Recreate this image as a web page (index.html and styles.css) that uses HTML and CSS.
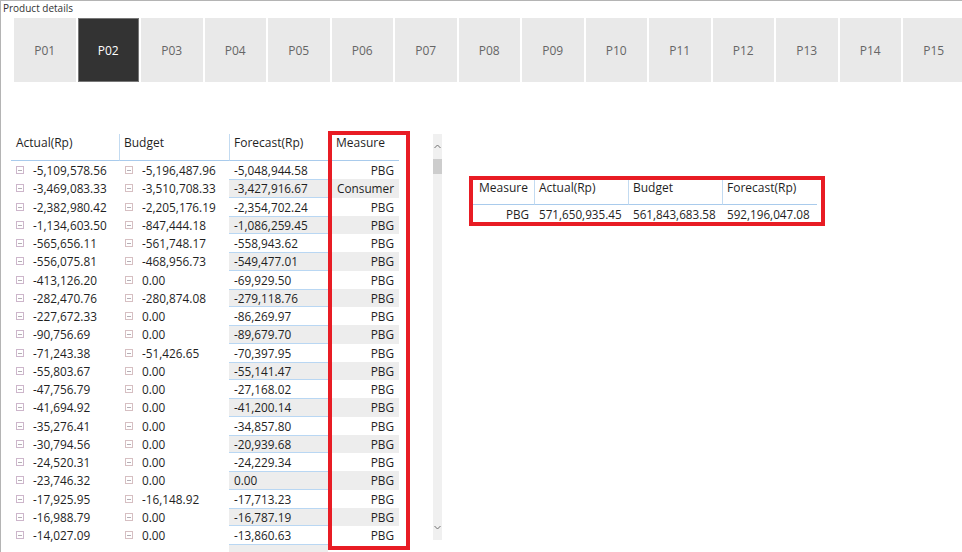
FILE: index.html
```html
<!DOCTYPE html>
<html>
<head>
<meta charset="utf-8">
<link rel="stylesheet" href="styles.css">
</head>
<body>
<div class="frame">
  <div class="title">Product details</div>
  <div class="tabs">
    <div class="tab">P01</div>
    <div class="tab active">P02</div>
    <div class="tab">P03</div>
    <div class="tab">P04</div>
    <div class="tab">P05</div>
    <div class="tab">P06</div>
    <div class="tab">P07</div>
    <div class="tab">P08</div>
    <div class="tab">P09</div>
    <div class="tab">P10</div>
    <div class="tab">P11</div>
    <div class="tab">P12</div>
    <div class="tab">P13</div>
    <div class="tab">P14</div>
    <div class="tab">P15</div>
  </div>
  <div class="content">
    <div class="tbl">
      <div class="col actual">
        <div class="hd">Actual(Rp)</div>
        <div class="c"><span class="ex"></span>-5,109,578.56</div>
        <div class="c"><span class="ex"></span>-3,469,083.33</div>
        <div class="c"><span class="ex"></span>-2,382,980.42</div>
        <div class="c"><span class="ex"></span>-1,134,603.50</div>
        <div class="c"><span class="ex"></span>-565,656.11</div>
        <div class="c"><span class="ex"></span>-556,075.81</div>
        <div class="c"><span class="ex"></span>-413,126.20</div>
        <div class="c"><span class="ex"></span>-282,470.76</div>
        <div class="c"><span class="ex"></span>-227,672.33</div>
        <div class="c"><span class="ex"></span>-90,756.69</div>
        <div class="c"><span class="ex"></span>-71,243.38</div>
        <div class="c"><span class="ex"></span>-55,803.67</div>
        <div class="c"><span class="ex"></span>-47,756.79</div>
        <div class="c"><span class="ex"></span>-41,694.92</div>
        <div class="c"><span class="ex"></span>-35,276.41</div>
        <div class="c"><span class="ex"></span>-30,794.56</div>
        <div class="c"><span class="ex"></span>-24,520.31</div>
        <div class="c"><span class="ex"></span>-23,746.32</div>
        <div class="c"><span class="ex"></span>-17,925.95</div>
        <div class="c"><span class="ex"></span>-16,988.79</div>
        <div class="c"><span class="ex"></span>-14,027.09</div>
      </div>
      <div class="col budget">
        <div class="hd">Budget</div>
        <div class="c"><span class="ex"></span>-5,196,487.96</div>
        <div class="c"><span class="ex"></span>-3,510,708.33</div>
        <div class="c"><span class="ex"></span>-2,205,176.19</div>
        <div class="c"><span class="ex"></span>-847,444.18</div>
        <div class="c"><span class="ex"></span>-561,748.17</div>
        <div class="c"><span class="ex"></span>-468,956.73</div>
        <div class="c"><span class="ex"></span>0.00</div>
        <div class="c"><span class="ex"></span>-280,874.08</div>
        <div class="c"><span class="ex"></span>0.00</div>
        <div class="c"><span class="ex"></span>0.00</div>
        <div class="c"><span class="ex"></span>-51,426.65</div>
        <div class="c"><span class="ex"></span>0.00</div>
        <div class="c"><span class="ex"></span>0.00</div>
        <div class="c"><span class="ex"></span>0.00</div>
        <div class="c"><span class="ex"></span>0.00</div>
        <div class="c"><span class="ex"></span>0.00</div>
        <div class="c"><span class="ex"></span>0.00</div>
        <div class="c"><span class="ex"></span>0.00</div>
        <div class="c"><span class="ex"></span>-16,148.92</div>
        <div class="c"><span class="ex"></span>0.00</div>
        <div class="c"><span class="ex"></span>0.00</div>
      </div>
      <div class="col forecast">
        <div class="hd">Forecast(Rp)</div>
        <div class="c">-5,048,944.58</div>
        <div class="c alt">-3,427,916.67</div>
        <div class="c">-2,354,702.24</div>
        <div class="c alt">-1,086,259.45</div>
        <div class="c">-558,943.62</div>
        <div class="c alt">-549,477.01</div>
        <div class="c">-69,929.50</div>
        <div class="c alt">-279,118.76</div>
        <div class="c">-86,269.97</div>
        <div class="c alt">-89,679.70</div>
        <div class="c">-70,397.95</div>
        <div class="c alt">-55,141.47</div>
        <div class="c">-27,168.02</div>
        <div class="c alt">-41,200.14</div>
        <div class="c">-34,857.80</div>
        <div class="c alt">-20,939.68</div>
        <div class="c">-24,229.34</div>
        <div class="c alt">0.00</div>
        <div class="c">-17,713.23</div>
        <div class="c alt">-16,787.19</div>
        <div class="c">-13,860.63</div>
        <div class="c alt"></div>
      </div>
      <div class="col measure">
        <div class="hd">Measure</div>
        <div class="c">PBG</div>
        <div class="c alt">Consumer</div>
        <div class="c">PBG</div>
        <div class="c alt">PBG</div>
        <div class="c">PBG</div>
        <div class="c alt">PBG</div>
        <div class="c">PBG</div>
        <div class="c alt">PBG</div>
        <div class="c">PBG</div>
        <div class="c alt">PBG</div>
        <div class="c">PBG</div>
        <div class="c alt">PBG</div>
        <div class="c">PBG</div>
        <div class="c alt">PBG</div>
        <div class="c">PBG</div>
        <div class="c alt">PBG</div>
        <div class="c">PBG</div>
        <div class="c alt">PBG</div>
        <div class="c">PBG</div>
        <div class="c alt">PBG</div>
        <div class="c">PBG</div>
      </div>
    </div>
    <div class="scroll">
      <div class="arrow up"><svg width="7" height="5" viewBox="0 0 7 5"><polyline points="0.5,4 3.5,1 6.5,4" fill="none" stroke="#707070" stroke-width="1"/></svg></div>
      <div class="thumb"></div>
      <div class="arrow down"><svg width="7" height="5" viewBox="0 0 7 5"><polyline points="0.5,1 3.5,4 6.5,1" fill="none" stroke="#707070" stroke-width="1"/></svg></div>
    </div>
    <div class="sumbox">
      <div class="sum">
        <div class="sh first">Measure</div>
        <div class="sh">Actual(Rp)</div>
        <div class="sh">Budget</div>
        <div class="sh">Forecast(Rp)</div>
        <div class="sd first">PBG</div>
        <div class="sd">571,650,935.45</div>
        <div class="sd">561,843,683.58</div>
        <div class="sd">592,196,047.08</div>
      </div>
    </div>
  </div>
</div>
</body>
</html>
```
FILE: styles.css
```css
html, body {
  margin: 0;
  padding: 0;
}
body {
  width: 962px;
  height: 552px;
  overflow: hidden;
  background: #fff;
  font-family: "Open Sans", "Noto Sans", sans-serif;
  color: #1f1f1f;
}
.frame {
  height: 551px;
  border-top: 1px solid #b4b4b4;
  border-left: 1px solid #b4b4b4;
  overflow: hidden;
}
.title {
  font-size: 10px;
  line-height: 14px;
  height: 14px;
  padding-left: 2px;
  color: #333;
}
.tabs {
  display: flex;
  gap: 2px;
  margin: 3px 0 0 13px;
}
.tab {
  flex: 0 0 61.5px;
  height: 64px;
  box-sizing: border-box;
  background: #e9e9e9;
  color: #666;
  font-size: 12px;
  display: flex;
  align-items: center;
  justify-content: center;
}
.tab.active {
  background: #333;
  color: #fff;
  border: 1px solid #777;
}
.content {
  display: flex;
  align-items: flex-start;
  margin-top: 49px;
}
.tbl {
  display: flex;
  align-items: flex-start;
  margin-left: 10px;
}
.col {
  display: flex;
  flex-direction: column;
  margin-top: 3px;
}
.hd {
  flex: 0 0 auto;
  box-sizing: border-box;
  height: 27px;
  padding-top: 1px;
  line-height: 16px;
  font-size: 12px;
  border-bottom: 1px solid #a9cbec;
  white-space: nowrap;
}
.c {
  flex: 0 0 18.25px;
  height: 18.25px;
  line-height: 18.25px;
  font-size: 11.8px;
  white-space: nowrap;
  display: flex;
  align-items: center;
  box-sizing: border-box;
}
.actual { width: 108px; }
.actual .hd { padding-left: 5px; }
.actual .c { padding-left: 5px; }
.budget { width: 110px; }
.budget .hd { padding-left: 4px; border-left: 1px solid #c3dbf1; }
.budget .c { padding-left: 6px; }
.forecast { width: 99px; }
.forecast .hd { padding-left: 4px; border-left: 1px solid #c3dbf1; }
.forecast .c { padding-left: 5px; }
.forecast .c.alt {
  background: #ededed;
  box-shadow: inset 0 1px 0 #b9d7f3, inset 0 -1px 0 #b9d7f3;
}
.ex {
  width: 8px;
  height: 8px;
  border: 1px solid #cdb6cb;
  box-sizing: border-box;
  position: relative;
  margin-right: 9px;
  flex: 0 0 auto;
}
.budget .ex { border-color: #d6bfc2; }
.ex::after {
  content: "";
  position: absolute;
  left: 1px;
  right: 1px;
  top: 3px;
  height: 1px;
  background: #b5aeb5;
}
.measure {
  margin-top: 0;
  width: 82px;
  height: 419px;
  box-sizing: border-box;
  border: 4px solid #e81c24;
  padding-right: 7px;
  overflow: hidden;
}
.measure .hd {
  height: 26px;
  padding-top: 0;
  padding-left: 4px;
}
.measure .c {
  justify-content: flex-end;
  padding-right: 5px;
}
.measure .c.alt { background: #ededed; }
.scroll {
  margin-left: 23px;
  margin-top: 3px;
  width: 9px;
  height: 406px;
  background: #f0f0f0;
  display: flex;
  flex-direction: column;
}
.arrow {
  height: 24px;
  display: flex;
  align-items: center;
  justify-content: center;
}
.arrow.down {
  margin-top: auto;
  height: 26px;
}
.thumb {
  margin-top: 1px;
  height: 15px;
  background: #cdcdcd;
}
.sumbox {
  margin-left: 27px;
  margin-top: 45px;
  border: 4px solid #e81c24;
  padding-right: 4px;
}
.sum {
  display: grid;
  grid-template-columns: 61px 94px 94px 95px;
}
.sh {
  height: 25px;
  box-sizing: border-box;
  line-height: 16px;
  font-size: 12px;
  padding-left: 4px;
  border-left: 1px solid #c3dbf1;
  border-bottom: 1px solid #a9cbec;
  white-space: nowrap;
}
.sh.first {
  border-left: none;
  padding-left: 6px;
}
.sd {
  height: 17px;
  line-height: 19px;
  font-size: 11.7px;
  padding-left: 5px;
  white-space: nowrap;
}
.sd.first {
  text-align: right;
  padding-left: 0;
  padding-right: 5px;
}
```
